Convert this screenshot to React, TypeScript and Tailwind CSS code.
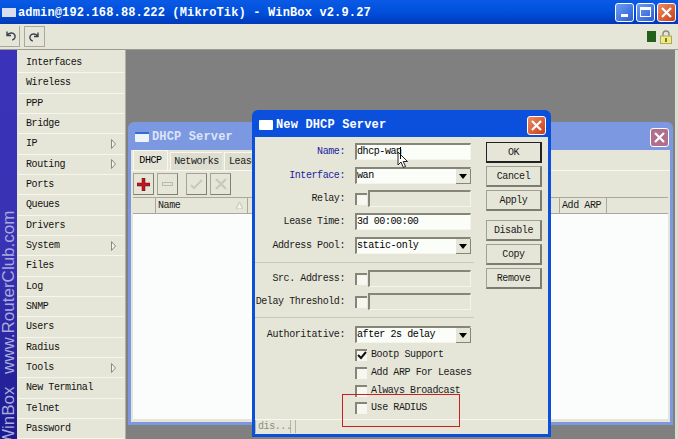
import type { ReactNode } from "react";

const MENU = [
  ["Interfaces"], ["Wireless"], ["PPP"], ["Bridge"], ["IP", true], ["Routing", true], ["Ports"], ["Queues"], ["Drivers"],
  ["System", true], ["Files"], ["Log"], ["SNMP"], ["Users"], ["Radius"], ["Tools", true], ["New Terminal"], ["Telnet"], ["Password"],
] as [string, boolean?][];

function CloseBtn({ faded }: { faded?: boolean }) {
  return (
    <div className={`w-[19px] h-[19px] rounded-[3px] border border-white flex items-center justify-center ${faded ? "bg-[#b0708c] border-[#d8c8d8]" : "bg-gradient-to-br from-[#ee8a60] to-[#c83c14]"}`}>
      <svg width="13" height="13" viewBox="0 0 13 13" fill="none" stroke="white" strokeWidth="2.2"><path d="M2 2l9 9M11 2l-9 9" /></svg>
    </div>
  );
}

function WinIcon({ dim }: { dim?: boolean }) {
  return (
    <div className={`w-[14px] h-[10px] rounded-[1px] shrink-0 ${dim ? "bg-[#eef2fb] border-t-2 border-[#3568d8]" : "bg-white"}`} />
  );
}

function Field({ children, className = "" }: { children?: ReactNode; className?: string }) {
  return (
    <div className={`h-[17px] border-t-2 border-l-2 border-[#85857a] border-b border-r border-b-[#f4f4ec] border-r-[#f4f4ec] bg-[#fbfdf8] leading-[14px] text-black whitespace-nowrap ${className}`}>
      {children}
    </div>
  );
}

function Select({ value }: { value: string }) {
  return (
    <div className="relative">
      <Field className="w-[116px]">{value}</Field>
      <div className="absolute right-0 top-[2px] w-[15px] h-[15px] bg-[#e6e6d8] border-r border-b border-[#85857a] flex items-center justify-center">
        <svg width="8" height="5" viewBox="0 0 8 5"><path d="M0 0h8L4 5z" fill="#000" /></svg>
      </div>
    </div>
  );
}

function Check({ on, mute }: { on?: boolean; mute?: boolean }) {
  return (
    <div className={`w-[12px] h-[12px] shrink-0 border-t-2 border-l-2 border-[#85857a] flex items-center justify-center ${mute ? "bg-[#eeeee4]" : "bg-[#f7f7f0]"}`}>
      {on && <svg width="10" height="9" viewBox="0 0 10 9" fill="none" stroke="#111" strokeWidth="2"><path d="M1 4l3 3 5-6" /></svg>}
    </div>
  );
}

function Row({ label, blue, children, mt = "mt-[6px]" }: { label: string; blue?: boolean; children: ReactNode; mt?: string }) {
  return (
    <div className={`flex items-center h-[17px] ${mt}`}>
      <div className={`w-[92px] text-right pr-[2px] whitespace-nowrap ${blue ? "text-[#1c1ca0]" : "text-[#1a1a1a]"}`}>{label}:</div>
      <div className="ml-[8px]">{children}</div>
    </div>
  );
}

function CheckField() {
  return (
    <div className="flex items-center gap-[1px]">
      <Check />
      <div className="w-[103px] h-[17px] border-t-2 border-l-2 border-[#85857a] border-b border-r border-b-[#f4f4ec] border-r-[#f4f4ec] bg-[#e6e6d8]" />
    </div>
  );
}

function Opt({ label, on, mt = "mt-[5px]" }: { label: string; on?: boolean; mt?: string }) {
  return (
    <div className={`flex items-center gap-[4px] pl-[100px] h-[13px] ${mt}`}>
      <Check on={on} />
      <span className="whitespace-nowrap text-[#1a1a1a]">{label}</span>
    </div>
  );
}

function DlgBtn({ label, strong, mt = "mt-[3px]" }: { label: string; strong?: boolean; mt?: string }) {
  return (
    <div className={`h-[21px] w-[56px] pt-[1px] flex items-center justify-center text-[#1a1a1a] border ${strong ? "border-[#222] border-b-2 border-r-2" : "border-[#a0a094] border-b-2 border-r-2 border-b-[#7c7c70] border-r-[#7c7c70]"} ${mt}`}>
      {label}
    </div>
  );
}

function ToolBtn({ children, className = "" }: { children: ReactNode; className?: string }) {
  return <div className={`w-[21px] h-[22px] bg-[#e6e6d8] border border-[#a4a498] border-b-[#808074] border-r-[#808074] flex items-center justify-center ${className}`}>{children}</div>;
}

export default function App() {
  return (
    <div className="relative w-[678px] h-[439px] overflow-hidden bg-[#808080] flex flex-col font-['Liberation_Mono',monospace] text-[10px] tracking-[-0.42px]">
      {/* main title bar */}
      <div className="h-[24px] shrink-0 bg-gradient-to-b from-[#0a5ae6] via-[#0050dc] to-[#0238b8] flex items-center pl-[2px] pr-[2px]">
        <div className="w-[14px] h-[9px] bg-[#d8e0f0] mr-[2px]" />
        <span className="text-white font-bold text-[12px] tracking-[0.15px] whitespace-nowrap pt-[1px]">admin@192.168.88.222 (MikroTik) - WinBox v2.9.27</span>
        <div className="ml-auto flex gap-[2px]">
          <div className="w-[19px] h-[19px] rounded-[3px] border border-white bg-gradient-to-br from-[#6f9cf0] to-[#2a5cd8] flex items-end pl-[5px] pb-[4px]"><div className="w-[7px] h-[3px] bg-white" /></div>
          <div className="w-[19px] h-[19px] rounded-[3px] border border-white bg-gradient-to-br from-[#6f9cf0] to-[#2a5cd8] flex items-center justify-center"><div className="w-[11px] h-[10px] border border-white border-t-[3px]" /></div>
          <CloseBtn />
        </div>
      </div>

      {/* toolbar */}
      <div className="h-[26px] shrink-0 bg-[#e6e6d8] border-b border-[#9a9a8e] flex items-center">
        <div className="w-[20px] h-[21px] border-r border-b border-[#a8a89c] flex items-center justify-center">
          <svg width="14" height="12" viewBox="0 0 14 12" fill="none" stroke="#3a4050" strokeWidth="1.4"><path d="M4 1.5v4h4M4.2 5.2C6 2.6 10 2.2 11.6 4.6c1.2 2 .3 4.6-2.4 5.6" /></svg>
        </div>
        <div className="w-[21px] h-[21px] ml-[4px] border border-[#a8a89c] flex items-center justify-center">
          <svg width="14" height="12" viewBox="0 0 14 12" fill="none" stroke="#3a4050" strokeWidth="1.4"><path d="M10 1.5v4H6M9.8 5.2C8 2.6 4 2.2 2.4 4.6c-1.2 2-.3 4.6 2.4 5.6" /></svg>
        </div>
        <div className="ml-auto flex items-center gap-[4px] pr-[6px]">
          <div className="w-[9px] h-[11px] bg-[#24601c]" />
          <svg width="12" height="14" viewBox="0 0 12 14"><path d="M3 6V4a3 3 0 016 0v2" fill="none" stroke="#8a8a80" strokeWidth="1.4" /><rect x="0.5" y="6" width="11" height="7.5" fill="#ecec80" stroke="#b0a860" /><rect x="5" y="8" width="2" height="4" fill="#807830" /></svg>
        </div>
      </div>

      {/* body */}
      <div className="flex-1 flex min-h-0">
        <div className="w-[17px] shrink-0 bg-gradient-to-b from-[#3a32b8] via-[#3a32b4] to-[#1c1a90] flex flex-col justify-end overflow-hidden relative">
          <div className="[writing-mode:vertical-rl] rotate-180 font-['Liberation_Sans',sans-serif] text-[17px] leading-[17px] tracking-normal text-[#a8acdc] whitespace-nowrap -mb-[6px]">
            WinBox<span className="inline-block mt-[12px]">www.RouterClub.com</span>
          </div>
        </div>
        <div className="w-[108px] shrink-0 bg-[#e6e6d8] pt-[3px] pl-[1px] pr-[1px]">
          {MENU.map(([name, sub]) => (
            <div key={name} className="h-[20.33px] border-b border-[#f6f6ee] pl-[8px] flex items-center justify-between pr-[8px] text-[#111] whitespace-nowrap">
              <span>{name}</span>
              {sub && <svg width="5" height="10" viewBox="0 0 5 10"><path d="M0.5 0.5L4.5 5L0.5 9.5z" fill="#f4f4f0" stroke="#8a8a80" /></svg>}
            </div>
          ))}
        </div>
        <div className="w-[1px] bg-[#b0b0a4]" />
        <div className="ml-auto w-[3px] bg-[#dcdcd0]" />
      </div>

      {/* DHCP Server window */}
      <div className="absolute left-[128px] top-[122px] w-[545px] h-[303px] rounded-t-[6px] bg-[#7c98e0] p-[3px] pt-0 flex flex-col">
        <div className="h-[28px] shrink-0 flex items-center pl-[4px] pr-[1px] pt-[2px]">
          <WinIcon dim />
          <span className="ml-[3px] font-bold text-[12px] tracking-[0.15px] text-[#dce4f8]">DHCP Server</span>
          <div className="ml-auto"><CloseBtn faded /></div>
        </div>
        <div className="flex-1 bg-[#e6e6d8] flex flex-col min-h-0">
          <div className="h-[20px] flex items-end pl-[2px] gap-[2px] shrink-0">
            <div className="w-[35px] h-[20px] bg-[#e6e6d8] border-t border-l border-r border-[#f8f8f0] flex items-center justify-center text-black">DHCP</div>
            <div className="w-[52px] h-[18px] bg-[#deded0] border-t border-l border-[#f8f8f0] flex items-center justify-center text-[#1a1a1a]">Networks</div>
            <div className="w-[40px] h-[18px] bg-[#deded0] border-t border-l border-[#f8f8f0] pl-[4px] flex items-center text-[#1a1a1a]">Leases</div>
          </div>
          <div className="h-[27px] border-t border-[#f8f8f0] flex items-center pl-[2px] shrink-0">
            <ToolBtn><svg width="13" height="13" viewBox="0 0 13 13"><path d="M5 0h3v5h5v3H8v5H5V8H0V5h5z" fill="#c4141c" stroke="#501010" strokeWidth=".5" /></svg></ToolBtn>
            <ToolBtn className="ml-[3px]"><div className="w-[11px] h-[4px] border border-[#b8b8ac]" /></ToolBtn>
            <ToolBtn className="ml-[8px]"><svg width="13" height="12" viewBox="0 0 13 12" fill="none" stroke="#c8c8bc" strokeWidth="2"><path d="M1 7l3 3 8-8" /></svg></ToolBtn>
            <ToolBtn className="ml-[3px]"><svg width="12" height="12" viewBox="0 0 12 12" fill="none" stroke="#c8c8bc" strokeWidth="2.4"><path d="M1 1l10 10M11 1L1 11" /></svg></ToolBtn>
          </div>
          <div className="h-[17px] mx-[2px] bg-[#e6e6d8] border-t border-b border-[#a8a89c] flex text-[#1a1a1a] shrink-0">
            <div className="w-[23px] border-r border-[#a8a89c]" />
            <div className="w-[92px] border-r border-[#a8a89c] pl-[2px] flex items-center justify-between pr-[4px]">
              <span>Name</span>
              <svg width="7" height="7" viewBox="0 0 7 7"><path d="M3.5 0L7 7H0z" fill="#f4f4ec" stroke="#c0c0b4" /></svg>
            </div>
            <div className="w-[312px] border-r border-[#a8a89c]" />
            <div className="w-[47px] border-r border-[#a8a89c] pl-[2px] flex items-center whitespace-nowrap">Add ARP</div>
          </div>
          <div className="flex-1 mx-[2px] mb-[3px] bg-[#fbfdfc]" />
        </div>
      </div>

      {/* New DHCP Server dialog */}
      <div className="absolute left-[252px] top-[110px] w-[299px] h-[327px] rounded-t-[6px] bg-[#0a50dc] p-[3px] pt-0 flex flex-col">
        <div className="h-[27px] shrink-0 flex items-center pl-[4px] pr-[2px] pt-[3px]">
          <WinIcon />
          <span className="ml-[3px] font-bold text-[12px] tracking-[0.15px] text-white">New DHCP Server</span>
          <div className="ml-auto"><CloseBtn /></div>
        </div>
        <div className="flex-1 bg-[#e6e6d8] flex flex-col min-h-0">
          <div className="flex-1 flex min-h-0">
            <div className="w-[225px] shrink-0 pt-[6px]">
              <Row label="Name" blue mt="mt-0"><Field className="w-[116px]">dhcp-wan</Field></Row>
              <Row label="Interface" blue mt="mt-[7px]"><Select value="wan" /></Row>
              <Row label="Relay"><CheckField /></Row>
              <Row label="Lease Time"><Field className="w-[116px]">3d 00:00:00</Field></Row>
              <Row label="Address Pool" mt="mt-[7px]"><Select value="static-only" /></Row>
              <div className="h-[1px] bg-[#f8f8f0] border-t border-[#c8c8bc] mt-[8px] w-[219px]" />
              <Row label="Src. Address" mt="mt-[7px]"><CheckField /></Row>
              <Row label="Delay Threshold"><CheckField /></Row>
              <div className="h-[1px] bg-[#f8f8f0] border-t border-[#c8c8bc] mt-[7px] w-[219px]" />
              <Row label="Authoritative" mt="mt-[8px]"><Select value="after 2s delay" /></Row>
              <Opt label="Bootp Support" on />
              <Opt label="Add ARP For Leases" />
              <Opt label="Always Broadcast" />
              <Opt label="Use RADIUS" mt="mt-[4px]" />
            </div>
            <div className="pl-[6px] pt-[5px]">
              <DlgBtn label="OK" strong mt="mt-0" />
              <DlgBtn label="Cancel" />
              <DlgBtn label="Apply" />
              <DlgBtn label="Disable" mt="mt-[9px]" />
              <DlgBtn label="Copy" />
              <DlgBtn label="Remove" />
            </div>
          </div>
          <div className="h-[14px] shrink-0 flex border-t border-[#f8f8f0] mb-[1px]">
            <div className="w-[36px] border-r border-l border-[#b4b4a8] pl-[2px] text-[#8c8c84] leading-[13px]">dis...</div>
            <div className="ml-[4px] flex-1 border-l border-[#b4b4a8]" />
          </div>
        </div>
      </div>

      {/* pointer over the name field */}
      <svg className="absolute left-[397px] top-[151px]" width="12" height="18" viewBox="0 0 12 18"><path d="M1 1v13l3-3 2.4 5.5 2.2-1L6.2 10.5H10.5z" fill="#fff" stroke="#222" strokeWidth="1" /></svg>
      <div className="absolute left-[400px] top-[147px] w-[1px] h-[12px] bg-black" />

      {/* red annotation */}
      <div className="absolute left-[342px] top-[394px] w-[118px] h-[33px] border border-[#cc2020]" />
    </div>
  );
}
